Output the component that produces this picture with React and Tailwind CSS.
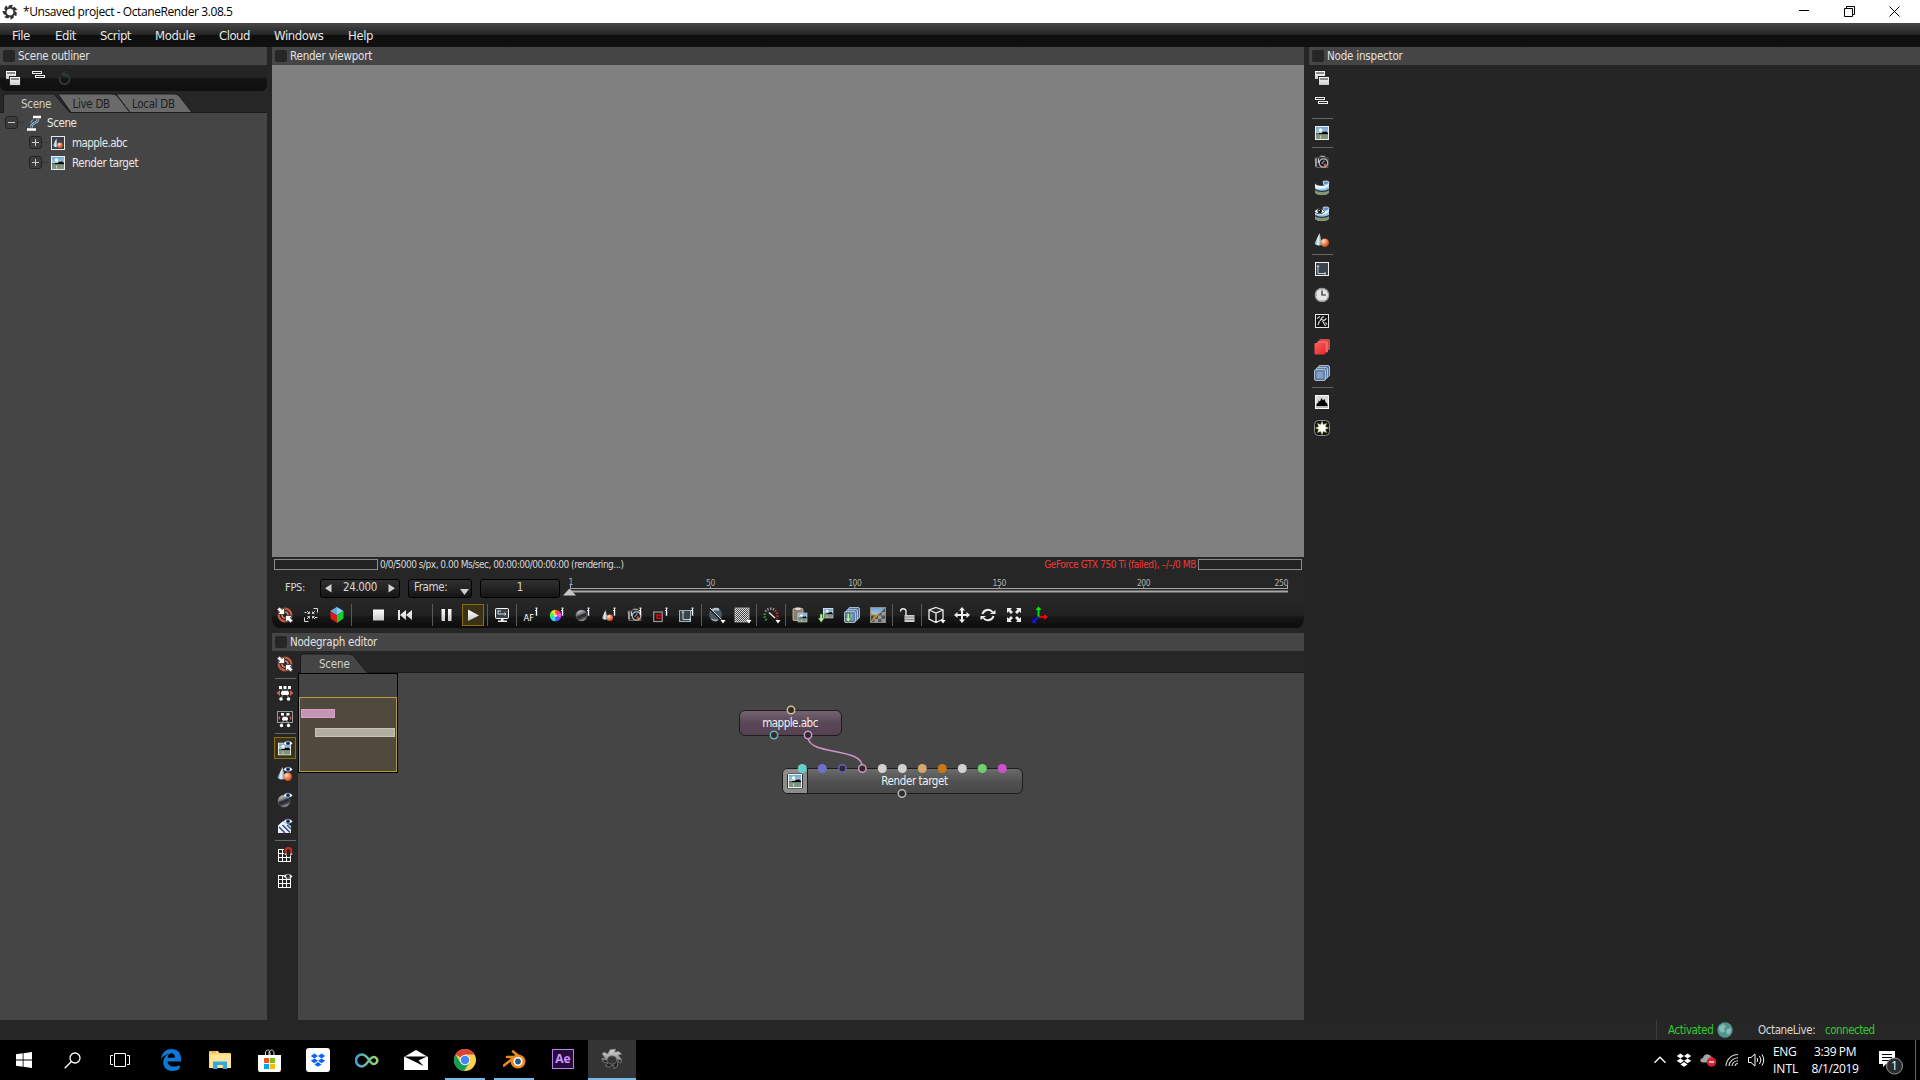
import { Fragment } from "react";

const ui = "font-['DejaVu_Sans_Condensed','DejaVu_Sans',sans-serif]";
const segoe = "font-['Open_Sans','Noto_Sans',sans-serif]";

/* ---------- icon helpers ---------- */

function Ic({ children, s = 20, className = "" }) {
  return (
    <svg width={s} height={s} viewBox="0 0 20 20" fill="none" className={`shrink-0 ${className}`}>
      {children}
    </svg>
  );
}

function Defs() {
  return (
    <svg width="0" height="0" className="absolute">
      <defs>
        <linearGradient id="white" x1="0" y1="0" x2="0" y2="1">
          <stop offset="0" stopColor="#fff" />
          <stop offset="1" stopColor="#c9c9c9" />
        </linearGradient>
        <linearGradient id="cone" x1="0" y1="0" x2="1" y2="0">
          <stop offset="0" stopColor="#6d8ea3" />
          <stop offset=".45" stopColor="#e8f4fa" />
          <stop offset="1" stopColor="#48687c" />
        </linearGradient>
        <radialGradient id="orange" cx=".35" cy=".3" r=".8">
          <stop offset="0" stopColor="#ffe2c8" />
          <stop offset=".5" stopColor="#f08050" />
          <stop offset="1" stopColor="#b83a14" />
        </radialGradient>
        <linearGradient id="ball" x1=".3" y1="0" x2=".7" y2="1">
          <stop offset="0" stopColor="#d8d8d8" />
          <stop offset=".35" stopColor="#77777a" />
          <stop offset=".5" stopColor="#26262a" />
          <stop offset=".7" stopColor="#3a3a40" />
          <stop offset="1" stopColor="#b4b4bc" />
        </linearGradient>
        <linearGradient id="sky" x1="0" y1="0" x2="0" y2="1">
          <stop offset="0" stopColor="#6fa6dc" />
          <stop offset="1" stopColor="#e9f1dc" />
        </linearGradient>
        <linearGradient id="red" x1="0" y1="0" x2="1" y2="1">
          <stop offset="0" stopColor="#ff5a5a" />
          <stop offset="1" stopColor="#e02a2a" />
        </linearGradient>
        <linearGradient id="loop" x1="0" y1="0" x2="1" y2="0">
          <stop offset="0" stopColor="#3fa3d6" />
          <stop offset="1" stopColor="#9ad46a" />
        </linearGradient>
        <linearGradient id="octane" gradientUnits="userSpaceOnUse" x1="0" y1="1" x2="0" y2="19">
          <stop offset="0" stopColor="#d8d8d8" />
          <stop offset=".45" stopColor="#999" />
          <stop offset=".55" stopColor="#151515" />
          <stop offset="1" stopColor="#333" />
        </linearGradient>
        <pattern id="checks" width="2" height="2" patternUnits="userSpaceOnUse">
          <rect width="2" height="2" fill="#ddd" />
          <rect width="1" height="1" fill="#444" />
          <rect x="1" y="1" width="1" height="1" fill="#444" />
        </pattern>
      </defs>
    </svg>
  );
}

function Needle() {
  return (
    <>
      <path d="M15.500 5v6" stroke="#8fb4d8" strokeWidth="1.600" />
      <path d="M15.500 4v6M14 5.500h2" stroke="#fff" strokeWidth="1" />
      <rect x="14.500" y="2.500" width="2" height="1.500" fill="#cfe4f6" />
    </>
  );
}

function Eye({ x = 0, y = 0, iris = "#1d4f9e" }) {
  return (
    <g transform={`translate(${x} ${y})`}>
      <path d="M8.500 5.500C10.500 2 15.500 2 17.500 5.500C15.500 8 10.500 8 8.500 5.500Z" fill="#fff" stroke="#667" strokeWidth=".4" />
      <circle cx="13" cy="5.200" r="2" fill={iris} />
      <circle cx="13" cy="5.200" r=".8" fill="#000" />
    </g>
  );
}

function Picture({ x = 3, y = 3, w = 14 }) {
  return (
    <svg x={x} y={y} width={w} height={w} viewBox="0 0 14 14">
      <rect width="14" height="14" fill="#eee" />
      <rect x="1" y="1" width="12" height="12" fill="url(#sky)" />
      <circle cx="5.500" cy="4" r="1.700" fill="#fdfbe0" />
      <path d="M1 8.500V7.500h3V7h3l1-1.500 1.500.5L11 5l1 1.500h1V8.500Z" fill="#000" />
      <rect x="1" y="8.500" width="12" height="4.500" fill="#7d9483" />
      <rect x="5" y="9.500" width="1" height="3" fill="#d7d38f" />
    </svg>
  );
}

function ConeBall() {
  return (
    <>
      <path d="M7.500 3L2.500 13.500C3.500 15.800 8 16 10.500 14.500Z" fill="url(#cone)" />
      <circle cx="12.800" cy="12.800" r="4.200" fill="url(#orange)" />
    </>
  );
}

function Windows2() {
  return (
    <Ic>
      <rect x="3" y="3" width="10" height="8" fill="url(#white)" />
      <path d="M4 5h8" stroke="#222" />
      <rect x="6.500" y="8.500" width="11" height="9" fill="url(#white)" stroke="#222" />
      <path d="M8 11h8" stroke="#222" />
    </Ic>
  );
}

function Bars2() {
  return (
    <Ic>
      <rect x="3.500" y="3.500" width="9" height="2" stroke="#f0f0f0" />
      <rect x="6.500" y="7.500" width="9" height="2" stroke="#f0f0f0" />
    </Ic>
  );
}

function Target() {
  return (
    <Ic>
      <circle cx="10" cy="10" r="6.300" stroke="#c4593f" strokeWidth="2.400" />
      <circle cx="10" cy="10" r="3" stroke="#d98672" strokeWidth="1.600" />
      <path d="M9.500 2.500v7h-7l2.300-2.300L2 4.500 4.500 2l2.700 2.800Z" fill="#fff" stroke="#222" strokeWidth=".7" />
      <path d="M10.500 10.500h7l-2.300 2.300L18 15.500 15.500 18l-2.700-2.800L10.500 17.500Z" fill="#fff" stroke="#222" strokeWidth=".7" />
    </Ic>
  );
}

function Aperture({ s, fill, stroke }) {
  return (
    <Ic s={s}>
      {[0, 51, 103, 154, 206, 257, 309].map((a) => (
        <path key={a} d="M9 1.500L13.500 1L12.500 4.500L15.500 8.500L12 5.800Q9.500 5 7.500 6.500Q7 4 9 1.500Z" fill={fill} stroke={stroke} strokeWidth=".4" transform={`rotate(${a} 10 10)`} />
      ))}
    </Ic>
  );
}

function Camera({ needle }) {
  return (
    <Ic>
      <path d="M3 6h4l1-2h5v2h3v9.500H4Z" fill="#2e2e2e" stroke="#777" strokeWidth=".7" />
      <path d="M4 6.500v8M6.500 6.500v4.500" stroke="#d0d0d0" strokeWidth="1.200" />
      <path d="M8.500 4.500h4" stroke="#aaa" strokeWidth="1.200" />
      <circle cx="11.500" cy="11" r="4.200" fill="#111" stroke="#b8b8b8" strokeWidth="1.200" />
      <path d="M9.500 12L12.500 8.500" stroke="#5c87b5" strokeWidth="1.600" />
      <circle cx="13" cy="12.800" r="1.500" fill="#d8502c" />
      {needle && <Needle />}
    </Ic>
  );
}

function Environment({ eye }) {
  return (
    <Ic>
      <path d="M3 5C3 9 17 9 17 4V14C17 18 3 18 3 14Z" fill="#9cc6ea" />
      <path d="M3 5C3 9 17 9 17 4V7C16 11 4 12 3 9Z" fill="#e8f3fb" />
      <path d="M3 11.500C6 14.500 14 14.500 17 11.500V14.500C16 18 4 18 3 14.500Z" fill="#87966a" />
      <path d="M3 11.500C6 14 14 14 17 11.500" stroke="#234" strokeWidth="1.300" />
      <path d="M11 3.500C14 2.500 17 3 17 4.500C17 6 14 7 12 7Z" fill="#5b93c8" stroke="#e8f3fb" strokeWidth=".8" />
      {eye && (
        <>
          <path d="M2.500 7.500C4.500 3.500 10.500 3.500 12.500 7.500C10.500 10.500 4.500 10.500 2.500 7.500Z" fill="#fff" stroke="#222" strokeWidth=".8" />
          <circle cx="7.700" cy="7" r="2.300" fill="#111" />
          <circle cx="7.200" cy="6.500" r=".7" fill="#ddd" />
        </>
      )}
    </Ic>
  );
}

function Stack({ arrow }) {
  return (
    <Ic>
      {[[6.500, 2.500], [4.500, 4.500], [2.500, 6.500]].map(([x, y]) => (
        <rect key={x} x={x} y={y} width="11" height="11" rx="1.500" fill="#5f83ab" fillOpacity=".8" stroke="#b4c9df" strokeWidth=".9" />
      ))}
      <rect x="5" y="9" width="6" height="6" fill="#a9c0d8" fillOpacity=".5" />
      {arrow && <path d="M5 8h2.500v5H9.500L6.200 17.500L3 13h2Z" fill="#b7f09a" stroke="#29551c" strokeWidth=".6" />}
    </Ic>
  );
}

function Film({ needle }) {
  return (
    <Ic>
      <rect x={needle ? 2.5 : 3.5} y={needle ? 5.5 : 3.5} width={needle ? 11 : 13} height={needle ? 11 : 13} fill="#38434b" stroke={needle ? "#a3b1bb" : "#f0f0f0"} />
      <path d="M6 6.500v8h8M4.800 8L6 6.500 7.200 8M12.500 13.300l1.500 1.200-1.500 1.200" stroke="#d5dbe0" strokeWidth=".9" />
      {needle && <Needle />}
    </Ic>
  );
}

function Grid({ children }) {
  return (
    <Ic>
      <path d="M3.500 4v13M7.500 4v13M11.500 4v13M15.500 4v13M3 4.500h13M3 8.500h13M3 12.500h13M3 16.500h13" stroke="#fff" strokeWidth="1" />
      {children}
    </Ic>
  );
}

const Caret = () => <path d="M14.500 15h5L17 18.500Z" fill="#fff" />;

/* ---------- toolbars ---------- */

const viewportTools = [
  <Target />,
  <Ic>
    <path d="M12.500 3.500h4v4M7.500 16.500h-4v-4M14 12.500h2.500M3.500 7.500h2" stroke="#ddd" />
    <path d="M6 6l2.500 2.500M8.500 6.500v2h-2M14 6l-2.500 2.500M11.500 6.500v2h2M6 14l2.500-2.500M6.500 11.500h2v2M14 14l-2.500-2.500M13.500 11.500h-2v2" stroke="#ddd" strokeWidth=".9" />
  </Ic>,
  <Ic>
    <path d="M10 2L16.500 6 10 10 3.500 6Z" fill="#8ecbf0" />
    <path d="M3.500 6L10 10v8L3.500 13.500Z" fill="#e01818" />
    <path d="M16.500 6L10 10v8l6.500-4.500Z" fill="#12d028" />
    <path d="M3.500 6L10 2v8Z" fill="#58aee0" />
  </Ic>,
  "|",
  "gap",
  <Ic><rect x="4" y="4.500" width="11" height="11" fill="url(#white)" /></Ic>,
  <Ic>
    <rect x="3" y="5" width="2" height="10" fill="#e8e8e8" />
    <path d="M11 5v10L5 10ZM17 5v10l-6-5Z" fill="url(#white)" />
  </Ic>,
  "gap",
  "|",
  <Ic><path d="M4.500 4H8v12H4.500ZM11 4h3.500v12H11Z" fill="url(#white)" /></Ic>,
  "play",
  "|",
  <Ic>
    <rect x="3.500" y="3.500" width="13" height="10" rx="1" fill="#38434b" stroke="#fff" />
    <path d="M6 6h3M6 5.500V9h8M12.500 7.500L14 9l-1.500 1.500" stroke="#d5dbe0" />
    <path d="M9 14h2.500v1.500H15V17H6v-1.500h3Z" fill="#eee" />
  </Ic>,
  "|",
  <Ic>
    <text x="2.500" y="16" fontSize="9.500" fill="#fff" textLength="10.500" lengthAdjust="spacingAndGlyphs" fontFamily="DejaVu Sans">AF</text>
    <Needle />
  </Ic>,
  <Ic>
    {["#f44", "#f4f", "#55f", "#3df", "#4f5", "#fd3"].map((c, i) => (
      <path key={c} d="M8.500 10.500L8.500 4.700A5.800 5.800 0 0 1 13.500 7.600Z" fill={c} transform={`rotate(${i * 60} 8.500 10.500)`} />
    ))}
    <circle cx="8.500" cy="10.500" r="1.600" fill="#fff" fillOpacity=".7" />
    <Needle />
  </Ic>,
  <Ic><circle cx="8.500" cy="10.500" r="5.500" fill="url(#ball)" stroke="#777" strokeWidth=".5" /><Needle /></Ic>,
  <Ic>
    <path d="M6.500 5L3 13c1 2 4 2 6 1Z" fill="url(#cone)" />
    <circle cx="10.800" cy="12.800" r="3.300" fill="url(#orange)" />
    <Needle />
  </Ic>,
  <Camera needle />,
  <Ic>
    <rect x="2.700" y="7" width="8.500" height="9.500" stroke="#9a9a9a" strokeWidth="1.200" />
    <rect x="6" y="10" width="4.300" height="3.300" stroke="red" strokeWidth="1.300" />
    <Needle />
  </Ic>,
  <Film needle />,
  "|",
  <Ic>
    <circle cx="9.500" cy="9.500" r="6.700" fill="#4c5a64" stroke="#2a3237" strokeWidth=".8" />
    <path d="M5 6.500a6 6 0 0 1 8-1.500" stroke="#b4c4d0" strokeWidth="2.600" />
    <path d="M5.500 14a6 6 0 0 0 6 1" stroke="#9eb0bd" strokeWidth="1.500" />
    <path d="M3.500 3.500l11.500 11.500" stroke="#1a1f23" strokeWidth="2" />
    <path d="M4 3l11.500 11.500" stroke="#e8eef2" strokeWidth=".9" />
    <Caret />
  </Ic>,
  <Ic><rect x="3" y="3" width="14" height="14" fill="url(#checks)" stroke="#bbb" strokeWidth=".8" /><Caret /></Ic>,
  "|",
  <Ic>
    <path d="M5.500 15A6.500 6.500 0 0 1 4 8" stroke="#26b03a" strokeWidth="2.500" strokeDasharray="1.300 1.500" />
    <path d="M4.500 6.500A6.500 6.500 0 0 1 13 4.500" stroke="#b0a5a5" strokeWidth="2.500" strokeDasharray="1.200 1.500" />
    <path d="M14 5.500A6.500 6.500 0 0 1 15.500 14" stroke="#e03030" strokeWidth="2.500" strokeDasharray="1.300 1.500" />
    <path d="M8 7.500L14 13" stroke="#eee" strokeWidth="1.400" />
    <Caret />
  </Ic>,
  "|",
  <Ic>
    <rect x="3" y="3.500" width="10" height="12" rx="1" fill="#8c7f6a" stroke="#cfcabb" strokeWidth=".8" />
    <rect x="5.500" y="2.500" width="5" height="2.500" fill="#ddd" />
    <Picture x={7.5} y={7.5} w={10} />
  </Ic>,
  <Ic>
    <Picture x={7} y={3} w={10.5} />
    <path d="M4 9h2.500v4H8.500L5.200 17.500L2 13h2Z" fill="#b7f09a" stroke="#29551c" strokeWidth=".5" />
  </Ic>,
  <Stack arrow />,
  <Ic>
    <rect x="2.500" y="2.500" width="15" height="15" fill="#555" />
    <path d="M3 3h14L3 17Z" fill="url(#sky)" />
    <path d="M3 8.500l4 1.500 4-2 3-2L3 17Z" fill="#c6892b" />
    <path d="M3 11l4-1-4 6Z" fill="#5a4a20" />
    <path d="M13.500 7H17v3.500h-3.500ZM10 10.500h3.500V14H10ZM13.500 14H17v3h-3.500ZM6.500 14H10v3H6.500Z" fill="#999" />
    <rect x="2.500" y="2.500" width="15" height="15" stroke="#8a8a8a" />
  </Ic>,
  "|",
  <Ic>
    <path d="M3.500 6.500C3.500 3 8.500 3 9 6v4" stroke="#e8e8e8" strokeWidth="1.400" />
    <rect x="7.500" y="10" width="10" height="7" fill="#ccc" />
    <path d="M7.500 12h10M7.500 14.500h10" stroke="#777" strokeWidth=".8" />
  </Ic>,
  "|",
  <Ic>
    <path d="M10 2.500L17 5v9l-7 3.500L3 14V5ZM3 5l7 3 7-3M10 8v9" stroke="#eee" strokeWidth="1.300" />
    <Caret />
  </Ic>,
  <Ic>
    <path d="M10 2l3 3.500h-2v3.500h3.500V7L18 10l-3.500 3v-2H11v3.500h2L10 18l-3-3.500h2V11H5.500v2L2 10l3.500-3v2H9V5.500H7Z" fill="#eee" />
  </Ic>,
  <Ic>
    <path d="M4.500 9A5.700 5.700 0 0 1 14.500 7M15.500 11A5.700 5.700 0 0 1 5.500 13" stroke="#eee" strokeWidth="2" />
    <path d="M12 9h5.500V5ZM8 11H2.500V15Z" fill="#eee" />
  </Ic>,
  <Ic>
    <path d="M3 3h5L6.500 4.500 9 7 7 9 4.500 6.500 3 8ZM17 3v5L15.500 6.500 13 9 11 7l2.500-2.500L12 3ZM3 17v-5l1.500 1.500L7 11l2 2-2.500 2.500L8 17ZM17 17h-5l1.500-1.500L11 13l2-2 2.500 2.500L17 12Z" fill="#eee" />
  </Ic>,
  <Ic>
    <path d="M8.500 12V4" stroke="#0d0" strokeWidth="2" />
    <path d="M5.500 5L8.500 1.500 11.500 5Z" fill="#0e0" />
    <path d="M9 12h6" stroke="red" strokeWidth="1.800" />
    <path d="M14 9l4 3-4 3Z" fill="red" />
    <path d="M8.500 12L4 16" stroke="#11f" strokeWidth="1.800" />
    <path d="M2.500 13.500v4.500H7Z" fill="#11f" />
  </Ic>,
];

const graphTools = [
  <Target />,
  "|",
  <Ic>
    <path d="M5 4l4 5M10 4v5M15 4l-4 5M9 11l-3 4M11 11l3 4" stroke="#888" />
    <path d="M4 3h3v3H4ZM8.500 3h3v3h-3ZM13 3h3v3h-3Z" fill="#fff" />
    <rect x="6" y="8" width="8" height="4" rx="1.500" fill="#fff" />
    <circle cx="6" cy="16" r="1.800" fill="#fff" />
    <circle cx="13.500" cy="16" r="1.800" fill="#fff" />
    <path d="M5 7v6L1.500 10ZM15 7v6l3.500-3Z" fill="#d5604c" />
  </Ic>,
  <Ic>
    <rect x="2.500" y="2.500" width="15" height="11" stroke="#999" />
    <path d="M7 5l3 4 3-4M10 9l-4 7M10 9l4 7" stroke="#999" />
    <rect x="7" y="8" width="6" height="3.500" rx="1.500" fill="#fff" />
    <path d="M6 4h3v2.500H6ZM11.500 4h3v2.500h-3Z" fill="#fff" />
    <circle cx="6.500" cy="16.500" r="1.700" fill="#fff" />
    <circle cx="13.500" cy="16.500" r="1.700" fill="#fff" />
    <path d="M5 7v4L3 9ZM15 7v4l2-2Z" fill="#d5604c" />
  </Ic>,
  "|",
  "target",
  <Ic><ConeBall /><Eye /></Ic>,
  <Ic><circle cx="9" cy="11" r="6" fill="url(#ball)" stroke="#777" strokeWidth=".5" /><Eye /></Ic>,
  <Ic>
    <path d="M3 9.500L8 5l8 5v7H3Z" fill="#eef2f8" />
    <path d="M4 11l6 6M7.500 9l7.500 7.500M12 9l4 4" stroke="#35568c" strokeWidth="1.700" />
    <Eye />
  </Ic>,
  "|",
  <Grid>
    <rect x="9" y="2" width="9" height="8.500" fill="#252525" />
    <path d="M10.700 9.500V5.500C10.700 2 16.200 2 16.200 5.500V9.500" stroke="#cf2a2a" strokeWidth="2" />
    <path d="M9.700 8.500h2v1.500h-2ZM15.200 8.500h2v1.500h-2Z" fill="#ccc" />
  </Grid>,
  <Grid><Eye iris="#444" /></Grid>,
];

const inspectorTools = [
  <Windows2 />,
  <Bars2 />,
  "|",
  <Ic><Picture /></Ic>,
  "|",
  <Camera />,
  <Environment />,
  <Environment eye />,
  <Ic><ConeBall /></Ic>,
  "|",
  <Film />,
  <Ic>
    <circle cx="10" cy="10" r="6.700" fill="#e6e6e6" stroke="#9d9d9d" strokeWidth="1.300" />
    <path d="M10 5.500V10h4" stroke="#222" strokeWidth="1.200" />
    <path d="M10 4v1M10 15v1M4 10h1" stroke="#777" />
  </Ic>,
  <Ic>
    <rect x="3.500" y="3.500" width="13" height="13" fill="#111" stroke="#e8e8e8" />
    <path d="M5 7.500l3-2M8 10l2-3.500 2-1M9.500 8.500l2.500 1 2.500-2M6 14l1.500-4M10.500 10l3 5M13.500 11.500l1.500 2" stroke="#d8d8d8" strokeWidth="1.200" />
  </Ic>,
  <Ic>
    <rect x="7" y="2" width="11" height="11" rx="1.500" fill="#d04848" />
    <rect x="5" y="4" width="11" height="11.500" rx="1.500" fill="#ee6464" />
    <rect x="2.500" y="6" width="11" height="11.500" rx="1" fill="url(#red)" />
  </Ic>,
  <Stack />,
  "|",
  <Ic>
    <rect x="3.500" y="3.500" width="13" height="13" fill="#d8d8d8" stroke="#fff" />
    <path d="M4.500 14v-2l2-1.500V8.500l1.500 1L9.500 6l1.500 2.500L12.500 7l1 3 2 2v2Z" fill="#000" />
    <path d="M4 15h12" stroke="#999" />
  </Ic>,
  <Ic>
    <rect x="2.500" y="2.500" width="15" height="15" rx="4" fill="#10140c" stroke="#8c8c8c" />
    <path d="M10 3.500l1.300 3.300 3.300-1.400-1.400 3.300L16.500 10l-3.300 1.300 1.400 3.300-3.300-1.400L10 16.500l-1.300-3.300-3.300 1.400 1.400-3.300L3.500 10l3.300-1.300-1.400-3.300 3.300 1.400Z" fill="#fff" stroke="#b5d67a" strokeWidth=".5" />
  </Ic>,
];

function ToolRow({ items }) {
  return (
    <div className="flex h-[26px] items-center">
      {items.map((it, i) => (
        <Fragment key={i}>
          {it === "|" ? (
            <div className="flex w-[3px] justify-center"><div className="h-[22px] w-px bg-[#5a5a5a]" /></div>
          ) : it === "gap" ? (
            <div className="w-[13px]" />
          ) : it === "play" ? (
            <div className="flex w-[26px] justify-center">
              <div className="flex h-[22px] w-[22px] items-center justify-center border border-[#8a6d10] bg-[#3a3217]">
                <Ic><path d="M5 4.500L16 10.500 5 16Z" fill="url(#white)" /></Ic>
              </div>
            </div>
          ) : (
            <div className="flex w-[26px] justify-center">{it}</div>
          )}
        </Fragment>
      ))}
    </div>
  );
}

function ToolColumn({ items }) {
  return (
    <div className="flex w-[26px] shrink-0 flex-col items-center">
      {items.map((it, i) => (
        <Fragment key={i}>
          {it === "|" ? (
            <div className="flex h-[3px] items-center"><div className="h-px w-[21px] bg-[#666]" /></div>
          ) : it === "target" ? (
            <div className="flex h-[26px] items-center">
              <div className="flex h-[22px] w-[22px] items-center justify-center border border-[#8a6d10] bg-[#3a3217]">
                <Ic><Picture x={3} y={4.5} w={13} /><Eye /></Ic>
              </div>
            </div>
          ) : (
            <div className="flex h-[26px] items-center">{it}</div>
          )}
        </Fragment>
      ))}
    </div>
  );
}

function PanelHeader({ title, className = "" }) {
  return (
    <div className="flex h-[18px] shrink-0 items-center bg-[#454545] pl-[3px]">
      <div className="h-3 w-3 rounded-[2px] bg-[#262626]" />
      <span className={`ml-[3px] pt-0.5 text-[11.5px] leading-none text-[#e2e2e2] ${className}`}>{title}</span>
    </div>
  );
}

/* ---------- top ---------- */

function TitleBar() {
  return (
    <div className={`flex h-[23px] items-center bg-white text-black ${segoe}`}>
      <div className="ml-0.5 flex w-[21px]"><Aperture s={16} fill="#333" /></div>
      <span className="text-[12px] leading-none tracking-[-0.41px]">*Unsaved project - OctaneRender 3.08.5</span>
      <div className="ml-auto flex">
        <div className="flex w-[45px] justify-center"><svg width="11" height="11" fill="none" stroke="#000"><path d="M0 4.500h10" /></svg></div>
        <div className="flex w-[45px] justify-center"><svg width="11" height="11" fill="none" stroke="#000"><path d="M.5 2.500h8v8h-8ZM2.500 2.500v-2h8v8h-2" /></svg></div>
        <div className="mr-[3px] flex w-[45px] justify-center"><svg width="11" height="11" fill="none" stroke="#000"><path d="M.5.5l10 10M10.500.5l-10 10" /></svg></div>
      </div>
    </div>
  );
}

function MenuBar() {
  return (
    <div className="flex h-6 items-center bg-[linear-gradient(#484848_0%,#232323_50%,#0e0e0e_50%,#111_100%)] pt-0.5 text-[13px] text-[#e6e6e6]">
      <span className="w-[43px] pl-3 tracking-[-0.4px]">File</span>
      <span className="w-[45px] pl-3 tracking-[-0.4px]">Edit</span>
      <span className="w-[55px] pl-3 tracking-[-0.5px]">Script</span>
      <span className="w-[64px] pl-3 tracking-[-0.4px]">Module</span>
      <span className="w-[55px] pl-3 tracking-[-0.5px]">Cloud</span>
      <span className="w-[74px] pl-3 tracking-[-0.4px]">Windows</span>
      <span className="pl-3 tracking-[-0.4px]">Help</span>
    </div>
  );
}

/* ---------- scene outliner ---------- */

function Toggle({ plus }) {
  return (
    <svg width="20" height="14" fill="none">
      <path d="M13 6.500h6" stroke="#383838" />
      <rect x=".5" y=".5" width="12" height="12" rx="2.500" fill="#3c3c3c" stroke="#222" />
      <path d={plus ? "M3 6.500h7M6.500 3v7" : "M3 6.500h7"} stroke="#ccc" />
    </svg>
  );
}

function Outliner() {
  return (
    <div className="flex w-[267px] shrink-0 flex-col">
      <PanelHeader title="Scene outliner" className="tracking-[-0.25px]" />
      <div className="flex h-[26px] items-center rounded-b-md bg-[linear-gradient(#262626_0%,#222_50%,#131313_52%,#0f0f0f_100%)]">
        <div className="flex w-[26px] justify-center"><Windows2 /></div>
        <div className="flex w-[26px] justify-center"><Bars2 /></div>
        <div className="flex w-[26px] justify-center">
          <Ic>
            <path d="M5 9A5 5 0 1 0 10.500 6.200" stroke="#2f3a2f" strokeWidth="2" />
            <path d="M6 6L10.500 2.500v7Z" fill="#2f3a2f" />
          </Ic>
        </div>
      </div>
      <div className="relative h-[22px] text-[11.5px]">
        <svg width="267" height="22" fill="none">
          <path d="M116 3h57c4 0 5 1 7 3l12 15.500H130Z" fill="#6a6a6a" stroke="#1c1c1c" />
          <path d="M58 3h53c4 0 5 1 7 3l12 15.500H71Z" fill="#6a6a6a" stroke="#1c1c1c" />
          <path d="M192 21.500h75" stroke="#1a1a1a" />
          <path d="M3.500 22V5.500q0-2.500 2.500-2.500h48L70 22Z" fill="#454545" />
          <path d="M0 21.500h3.500V5.500q0-2.500 2.500-2.500h48L70 21.500" stroke="#1c1c1c" />
        </svg>
        <div className="absolute inset-0 flex items-center pt-1.5 leading-none tracking-[-0.3px]">
          <span className="w-[51px] pl-[21px] text-[#d0d0d0]">Scene</span>
          <span className="w-[59px] pl-[21.5px] text-[#1e1e1e]">Live DB</span>
          <span className="pl-[22px] text-[#1e1e1e]">Local DB</span>
        </div>
      </div>
      <div className="flex-1 bg-[#454545] text-[11.5px] text-[#e8e8e8]">
        <div className="flex h-5 items-center pl-[5px]">
          <Toggle />
          <Ic className="-ml-px">
            <path d="M9 4h8M3 16.500h9" stroke="#fff" strokeWidth="2.600" />
            <path d="M14 6C14 9 12 9.500 10.500 10C8.500 10.500 7.500 12 7.500 14.500" stroke="#9cc3e0" strokeWidth="2.500" />
            <path d="M14 6C14 9 12 9.500 10.500 10C8.500 10.500 7.500 12 7.500 14.500" stroke="#26323c" strokeWidth=".8" />
            <path d="M9 6.500L6.500 9.500" stroke="#9cc3e0" />
          </Ic>
          <span className="ml-[3px] pt-0.5 leading-none tracking-[-0.4px]">Scene</span>
        </div>
        <div className="flex h-5 items-center pl-[29px]">
          <Toggle plus />
          <Ic className="-ml-px">
            <rect x="3.500" y="3.500" width="13" height="13" fill="#3a3f44" stroke="#e8e8e8" />
            <path d="M8.500 5L5 12.500c1 2 4 2 5 1Z" fill="url(#cone)" />
            <circle cx="12" cy="12.300" r="2.800" fill="url(#orange)" />
          </Ic>
          <span className="ml-1 pt-0.5 leading-none tracking-[-0.55px]">mapple.abc</span>
        </div>
        <div className="flex h-5 items-center pl-[29px]">
          <Toggle plus />
          <Ic className="-ml-px"><Picture /></Ic>
          <span className="ml-1 pt-0.5 leading-none tracking-[-0.42px]">Render target</span>
        </div>
      </div>
    </div>
  );
}

/* ---------- viewport ---------- */

const box = "flex h-[19px] items-center rounded-[3px] border border-black bg-[linear-gradient(#303030,#161616)]";

function Timeline() {
  const ticks = [50, 100, 150, 200];
  const pos = (f) => 8 + ((f - 1) * 719) / 249;
  return (
    <svg width="740" height="24" className="ml-px" fontFamily="DejaVu Sans Condensed, DejaVu Sans" fontSize="8.500" fill="#b0b0b0">
      <path d="M9 12.500h718" stroke="#a8a8a8" />
      <path d="M9 15.500h718" stroke="#a8a8a8" strokeWidth="2" />
      <text x="7.500" y="9">1</text>
      {ticks.map((t) => (
        <g key={t}>
          <text x={pos(t)} y="10" textAnchor="middle" letterSpacing="-0.4">{t}</text>
          <path d={`M${pos(t)} 10.500v2`} stroke="#a8a8a8" />
        </g>
      ))}
      <text x="727" y="10" textAnchor="end" letterSpacing="-0.4">250</text>
      <path d="M9.500 9v4M726.500 9v4" stroke="#a8a8a8" />
      <path d="M2 19.500L8 13h1l6 6.500Z" fill="#c8c8c8" />
    </svg>
  );
}

function Viewport() {
  return (
    <div className="flex h-[586px] shrink-0 flex-col">
      <PanelHeader title="Render viewport" className="tracking-[-0.2px]" />
      <div className="h-[492px] bg-[#808080]" />
      <div className="flex h-[15px] items-center px-0.5 text-[10px] leading-none">
        <div className="h-[11px] w-[104px] border border-[#8a8a8a] bg-[#222]" />
        <span className="ml-0.5 tracking-[-0.49px] text-[#d8d8d8]">0/0/5000 s/px, 0.00 Ms/sec, 00:00:00/00:00:00 (rendering...)</span>
        <span className="ml-auto mr-0.5 tracking-[-0.4px] text-[#f03a3a]">GeForce GTX 750 Ti (failed), –/–/0 MB</span>
        <div className="h-[11px] w-[104px] border border-[#8a8a8a] bg-[#222]" />
      </div>
      <div className="mt-0.5 flex h-[28px] items-center pl-[13px] text-[11.5px] text-[#d8d8d8]">
        <span className="w-[35px] text-[11px] tracking-[-0.3px]">FPS:</span>
        <div className={`${box} w-[80px] justify-between px-1`}>
          <svg width="7" height="9"><path d="M6.500 0v8.500L0 4.250Z" fill="#d0d0d0" /></svg>
          <span className="tracking-[-0.4px]">24.000</span>
          <svg width="7" height="9"><path d="M.5 0v8.500L7 4.250Z" fill="#d0d0d0" /></svg>
        </div>
        <div className={`${box} ml-2 w-[64px] justify-between pl-[5px] pr-0.5`}>
          <span className="tracking-[-0.4px]">Frame:</span>
          <svg width="9" height="6" className="mt-2"><path d="M0 0h9L4.500 6Z" fill="#d0d0d0" /></svg>
        </div>
        <div className={`${box} ml-2 w-[80px] justify-center`}>1</div>
        <Timeline />
      </div>
      <div className="rounded-b-lg bg-[linear-gradient(#262626_0%,#212121_50%,#161616_60%,#0c0c0c_100%)]">
        <ToolRow items={viewportTools} />
      </div>
    </div>
  );
}

/* ---------- nodegraph ---------- */

const pins = [
  ["#68cfcf", true],
  ["#6f6fd0", true],
  ["#6464c4", false],
  ["#cf94c4", false],
  ["#d2d2d2", true],
  ["#d2d2d2", true],
  ["#d0a870", true],
  ["#c87818", true],
  ["#d2d2d2", true],
  ["#70d070", true],
  ["#d050d0", true],
];

function Nodegraph() {
  return (
    <div className="flex min-h-0 flex-1 flex-col">
      <PanelHeader title="Nodegraph editor" className="tracking-[-0.25px]" />
      <div className="flex flex-1">
        <ToolColumn items={graphTools} />
        <div className="flex flex-1 flex-col">
          <div className="relative h-[22px]">
            <svg width="1006" height="22" fill="none">
              <path d="M2.500 22V6q0-3 3-3h45q4 0 6 3L70 22Z" fill="#454545" />
              <path d="M0 21.500h2.500V6q0-3 3-3h45q4 0 6 3L69 21.500H1006" stroke="#1a1a1a" />
            </svg>
            <span className="absolute left-[21px] top-2 text-[11.5px] leading-none tracking-[-0.2px] text-[#d0d0d0]">Scene</span>
          </div>
          <div className="relative flex-1 bg-[#454545]">
            <svg width="1006" height="347" viewBox="298 673 1006 347" fill="none" className="absolute inset-0">
              <defs>
                <linearGradient id="nodePurple" x1="0" y1="0" x2="0" y2="1">
                  <stop offset="0" stopColor="#756572" />
                  <stop offset=".5" stopColor="#594757" />
                  <stop offset="1" stopColor="#54404f" />
                </linearGradient>
                <linearGradient id="nodeGrey" x1="0" y1="0" x2="0" y2="1">
                  <stop offset="0" stopColor="#6c6c6c" />
                  <stop offset=".5" stopColor="#515151" />
                  <stop offset="1" stopColor="#484848" />
                </linearGradient>
              </defs>
              {/* minimap */}
              <rect x="298.500" y="673.500" width="99" height="99" stroke="#000" fill="#454545" />
              <rect x="299.500" y="697.500" width="97" height="74" stroke="#b89a3c" fill="#4f4a3d" />
              <rect x="301.500" y="709.500" width="33" height="8" stroke="#d8a0c8" fill="#c496b4" />
              <rect x="315.500" y="728.500" width="79" height="8" stroke="#c8c4b4" fill="#b2aea0" />
              {/* nodes */}
              <rect x="739.500" y="710.500" width="102" height="25" rx="5.500" fill="url(#nodePurple)" stroke="#1c1c1c" />
              <rect x="782.500" y="768.500" width="240" height="25" rx="5.500" fill="url(#nodeGrey)" stroke="#1c1c1c" />
              <path d="M807 769h-19q-5 0-5 5v14q0 5 5 5h19Z" fill="#8c8c8c" />
              <path d="M807.500 769v24" stroke="#1c1c1c" />
              <rect x="787" y="773.500" width="16" height="15" rx="1.500" fill="#333" />
              <Picture x={788} y={774} w={14} />
              <path d="M808 738C810 755 860 748 862 765" stroke="#cf94c4" strokeWidth="1.500" />
              <circle cx="791" cy="710" r="3.700" stroke="#cfc08c" strokeWidth="1.500" fill="#2e2a2e" />
              <circle cx="774" cy="735" r="3.700" stroke="#5fb8b8" strokeWidth="1.500" fill="#2e2a2e" />
              <circle cx="808" cy="735" r="3.700" stroke="#cf94c4" strokeWidth="1.500" fill="#2e2a2e" />
              {pins.map(([c, full], i) => (
                <circle key={i} cx={802.3 + i * 20} cy="768.500" r={full ? 4.5 : 3.7} stroke={c} strokeWidth={full ? 0 : 1.5} fill={full ? c : "#2c2c2c"} />
              ))}
              <circle cx="902" cy="793.500" r="3.700" stroke="#b8b8b8" strokeWidth="1.500" fill="#2c2c2c" />
            </svg>
            <span className="absolute left-[441px] top-[38px] flex h-[26px] w-[102px] items-center justify-center text-[11.5px] tracking-[-0.5px] text-[#f0f0f0]">mapple.abc</span>
            <span className="absolute left-[509px] top-[96px] flex h-[26px] w-[215px] items-center justify-center text-[11.5px] tracking-[-0.4px] text-[#f0f0f0]">Render target</span>
          </div>
        </div>
      </div>
    </div>
  );
}

function Inspector() {
  return (
    <div className="ml-[5px] flex flex-1 flex-col">
      <PanelHeader title="Node inspector" className="tracking-[-0.2px]" />
      <div className="flex-1 rounded-tl-md bg-[#252525]">
        <ToolColumn items={inspectorTools} />
      </div>
    </div>
  );
}

function StatusBar() {
  return (
    <div className="flex h-5 items-center justify-end pr-[47px] text-[11.5px]">
      <div className="h-full w-px bg-[#3c3c3c]" />
      <span className="ml-[11px] w-[49px] pt-0.5 tracking-[-0.4px] text-[#2fcb2f]">Activated</span>
      <svg width="16" height="16">
        <circle cx="8" cy="8" r="7.700" fill="#4f9490" />
        <path d="M2 5l4-3 3 2-2 3 1 2-3 2-3-3ZM10 7l4-1v4l-3 3-2-3Z" fill="#86bcb4" />
      </svg>
      <span className="ml-[25px] w-[67px] pt-0.5 tracking-[-0.4px] text-[#d8d8d8]">OctaneLive:</span>
      <span className="w-[48px] whitespace-nowrap pt-0.5 tracking-[-0.5px] text-[#2fcb2f]">connected</span>
    </div>
  );
}

/* ---------- taskbar ---------- */

function DropboxMark({ s, fill }) {
  return (
    <Ic s={s}>
      <path d="M5.500 2L10 5 5.500 8 1 5ZM14.500 2L19 5l-4.500 3L10 5ZM5.500 8L10 11l-4.500 3L1 11ZM14.500 8l4.500 3-4.500 3L10 11ZM10 12.500l4.500 3L10 18.500l-4.500-3Z" fill={fill} />
    </Ic>
  );
}

function Taskbar() {
  return (
    <div className={`flex h-10 items-center bg-black text-white ${segoe}`}>
      <div className="flex w-12 justify-center">
        <svg width="16" height="16" fill="#fff"><path d="M0 2.300L6.700 1.300V7.500H0ZM7.500 1.200L16 0v7.500H7.500ZM0 8.500h6.700v6.200L0 13.700ZM7.500 8.500H16V16L7.500 14.800Z" /></svg>
      </div>
      <div className="flex w-12 justify-center">
        <svg width="17" height="17" fill="none" stroke="#fff" strokeWidth="1.300"><circle cx="11" cy="6" r="5" /><path d="M7.500 9.500L.7 16.300" /></svg>
      </div>
      <div className="flex w-12 justify-center">
        <svg width="20" height="14" fill="none" stroke="#fff"><path d="M4.500.5h11v13h-11ZM3 2.500H.5v9H3M17 2.500h2.500v9H17" /></svg>
      </div>
      <div className="ml-[2.5px] flex w-[49px] justify-center">
        <svg width="20" height="22">
          <path d="M0 10C1 3 5.500 0 10.500 0C16.500 0 20 4 20 9.500V12.500H6.500C6.800 16 9.500 17.500 12.500 17.500C15 17.500 17 17 18.700 15.900V20C16.500 21.300 14 22 11.300 22C5.500 22 2.300 18 2.300 13.700C2.300 9.500 4.500 6.500 8 5C5 5.300 2 7 0 10ZM6.700 8.700H14C14 6 12.500 4.300 10.300 4.300C8.500 4.300 7 6 6.700 8.700Z" fill="#0c78d8" />
        </svg>
      </div>
      <div className="flex w-[49px] justify-center">
        <svg width="22" height="18">
          <path d="M0 1q0-1 1-1h8l1.500 2H21q1 0 1 1v14H0Z" fill="#f8d775" />
          <path d="M1 4h21v13H1Z" fill="#fde69a" />
          <path d="M2 1h5" stroke="#e09a20" />
          <path d="M4 10.500h14V18h-4v-4H8.500v4H4Z" fill="#34a9de" />
        </svg>
      </div>
      <div className="flex w-[49px] justify-center">
        <svg width="23" height="23">
          <path d="M7.500 6V4C7.500 0 12 0 12 4v2M11 6V4c0-4 5-4 5 0v2" fill="none" stroke="#ddd" />
          <path d="M0 6h23v14.500q0 2.500-2 2.500H2q-2 0-2-2.500Z" fill="#fff" />
          <path d="M6 9h5v5H6Z" fill="#f35325" />
          <path d="M12 9h5v5h-5Z" fill="#81bc06" />
          <path d="M6 15h5v5H6Z" fill="#05a6f0" />
          <path d="M12 15h5v5h-5Z" fill="#ffba08" />
        </svg>
      </div>
      <div className="flex w-[49px] justify-center">
        <div className="flex h-6 w-6 items-center justify-center rounded-[3px] bg-white"><DropboxMark s={16} fill="#0f62fe" /></div>
      </div>
      <div className="flex w-[49px] justify-center">
        <svg width="25" height="15" fill="none" stroke="url(#loop)" strokeWidth="2.500"><path d="M18.500 4A3.500 3.500 0 1 1 17 10.500C14 8 12 1.500 7 1.500A6 6 0 1 0 7 13.500C12 13.500 14 4.500 18.500 4" /></svg>
      </div>
      <div className="flex w-[49px] justify-center">
        <svg width="24" height="20"><path d="M0 7L12 0l12 7v13H0Z" fill="#fff" /><path d="M1 6.500h22L14.500 10.500 19.500 16 10.500 11.500 1 7Z" fill="#000" /></svg>
      </div>
      <div className="flex w-[49px] justify-center">
        <div className="flex h-10 w-10 flex-col items-center border-b-2 border-[#76b9ed] pt-[9px]">
          <svg width="22" height="22" viewBox="0 0 22 22">
            <circle cx="11" cy="11" r="11" fill="#fbd04b" />
            <path d="M11 11L1.500 5.500A11 11 0 0 1 20.500 5.500H11Z" fill="#db4437" />
            <path d="M1.500 5.500A11 11 0 0 0 10 22L15.500 13.500 6 13Z" fill="#0f9d58" />
            <circle cx="11" cy="11" r="5.200" fill="#f4f4f4" />
            <circle cx="11" cy="11" r="4.200" fill="#4285f4" />
          </svg>
        </div>
      </div>
      <div className="flex w-[49px] justify-center">
        <div className="flex h-10 w-10 flex-col items-center border-b-2 border-[#76b9ed] pt-[10px]">
          <svg width="23" height="20" fill="none">
            <path d="M1 15.500L11 7.500M4 7h10M10 1.500l8 6.500" stroke="#ec8a1c" strokeWidth="2.600" strokeLinecap="round" />
            <ellipse cx="15" cy="11.500" rx="7.500" ry="7" fill="#ec8a1c" />
            <circle cx="15" cy="11.500" r="4.600" fill="#fff" />
            <circle cx="15" cy="11.500" r="2.900" fill="#265787" />
          </svg>
        </div>
      </div>
      <div className="flex w-[49px] justify-center">
        <div className="mb-0.5 flex h-5 w-[22px] items-center justify-center border border-[#b882e8] bg-[#260a40] text-[12px] font-bold leading-none text-[#cf96fd]">Ae</div>
      </div>
      <div className="ml-[0.5px] flex h-10 w-12 justify-center border-b-2 border-[#76b9ed] bg-[#343434] pt-2">
        <svg width="24" height="24" viewBox="0 0 20 20">
          <path d="M8.500 1.500L13 1l-1 2.500 3.500-.5 2.500 2-3 1 3 3.500-.5 3-2.500-1.500-.500 4-2.500 2.500-1-3.500-3.500 2-3-1 2-2.500-4-1L1.500 9l3-.5L2 5l1-1.500 3.500 1.500ZM10 6.500C4.500 6.500 4.500 13.500 10 13.500S15.500 6.500 10 6.500Z" fill="url(#octane)" fillRule="evenodd" stroke="#8a8a8a" strokeWidth=".6" />
        </svg>
      </div>

      <div className="ml-auto flex h-10 items-center">
        <div className="flex w-6 justify-center"><svg width="12" height="8" fill="none" stroke="#fff" strokeWidth="1.300"><path d="M.5 6.800L6 1.200l5.500 5.600" /></svg></div>
        <div className="flex w-6 justify-center"><DropboxMark s={16} fill="#fff" /></div>
        <div className="flex w-6 justify-center">
          <svg width="17" height="14"><path d="M3 9.500C-1 9.500 0 5 3 5C3.500 1 9 0 11 3.500C14 4 14 9.500 11 9.500Z" fill="#a4a4a4" /><circle cx="11.500" cy="9" r="4.700" fill="#d8202c" /><path d="M9 9h5" stroke="#fff" strokeWidth="1.300" /></svg>
        </div>
        <div className="flex w-6 justify-center">
          <svg width="14" height="14" fill="none" stroke="#ddd" strokeWidth="1.100"><path d="M1 13A12 12 0 0 1 13 1.500M4 13A9 9 0 0 1 13 4.700M7 13A6 6 0 0 1 13 7.800M10 13A3 3 0 0 1 13 10.500" /></svg>
        </div>
        <div className="flex w-6 justify-center">
          <svg width="17" height="14" fill="none" stroke="#fff"><path d="M.5 4.500H3L7 1v12L3 9.500H.5ZM9 5q1.500 2 0 4M11.500 3q3 4 0 8M14 1.500q3.500 5.500 0 11" /></svg>
        </div>
        <div className="w-[37px] pl-[5px] text-[12px] leading-[17px]">
          <div className="tracking-[-0.3px]">ENG</div>
          <div>INTL</div>
        </div>
        <div className="w-[60px] text-center text-[12px] leading-[17px]">
          <div className="tracking-[-0.4px]">3:39 PM</div>
          <div className="tracking-[-0.4px]">8/1/2019</div>
        </div>
        <div className="ml-[13px] flex h-10 w-[38px] items-center border-r border-[#666]">
          <svg width="26" height="26" className="mt-1">
            <path d="M1 2h16v13H8l-3 3v-3H1Z" fill="#fff" />
            <path d="M4 5.500h10M4 8.500h10M4 11.500h7" stroke="#000" />
            <circle cx="16.500" cy="17" r="8" fill="#2b2b2b" stroke="#999" />
            <text x="16.500" y="21" textAnchor="middle" fontSize="12" fill="#fff">1</text>
          </svg>
        </div>
        <div className="w-1" />
      </div>
    </div>
  );
}

export default function App() {
  return (
    <div className={`flex h-[1080px] w-[1920px] flex-col overflow-hidden bg-[#262626] ${ui}`}>
      <Defs />
      <TitleBar />
      <MenuBar />
      <div className="flex h-[973px]">
        <Outliner />
        <div className="ml-[5px] flex w-[1032px] shrink-0 flex-col">
          <Viewport />
          <Nodegraph />
        </div>
        <Inspector />
      </div>
      <StatusBar />
      <Taskbar />
    </div>
  );
}
